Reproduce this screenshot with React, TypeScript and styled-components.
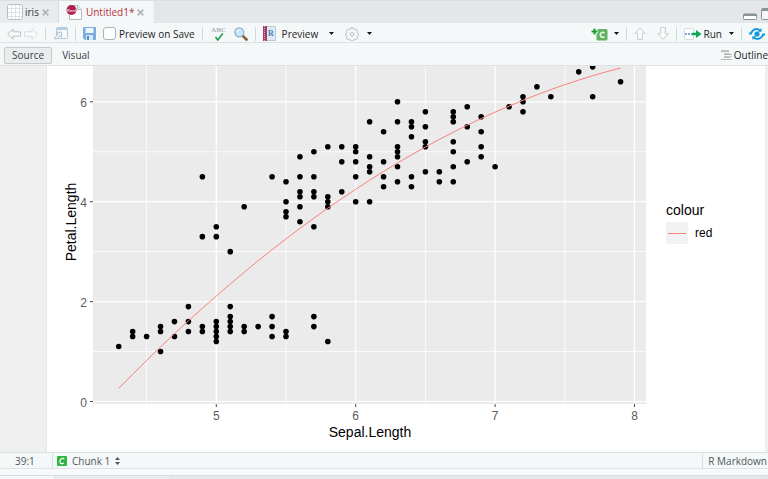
import React from "react";
import styled, { createGlobalStyle } from "styled-components";

const GlobalStyle = createGlobalStyle`
  * { box-sizing: border-box; }
  body {
    margin: 0;
    background: #e6e8ea;
    color: #1f2326;
    font: 10px/16px "Open Sans", "Noto Sans", sans-serif;
  }
  button { font: inherit; color: inherit; }
`;

const Editor = styled.div`
  display: flex;
  flex-direction: column;
  height: 100vh;
  overflow: hidden;
`;

const TabBar = styled.header`
  display: flex;
  height: 23px;
  flex: none;
  border-top: 1px solid #dcdfe1;
  background: #e4e6e8;
`;

const Tab = styled.div<{ $active?: boolean }>`
  display: flex;
  align-items: center;
  gap: 3px;
  padding: 0 9px 0 7px;
  color: ${(p) => (p.$active ? "#b5303c" : "#33383b")};
  background: ${(p) => (p.$active ? "#f4f8f9" : "#e9ebed")};
  border-right: 1px solid ${(p) => (p.$active ? "#eef1f2" : "#dadddf")};
`;

const PlainButton = styled.button<{ $gap?: number }>`
  display: flex;
  align-items: center;
  gap: ${(p) => p.$gap ?? 0}px;
  flex: none;
  padding: 0;
  border: 0;
  background: none;
  white-space: nowrap;
  svg { display: block; flex: none; }
`;

const WindowControls = styled.div`
  display: flex;
  align-items: flex-end;
  gap: 4px;
  margin-left: auto;
  padding-bottom: 3px;
`;

const Bar = styled.div<{ $height: number }>`
  display: flex;
  align-items: center;
  justify-content: space-between;
  flex: none;
  height: ${(p) => p.$height}px;
  padding-top: 2px;
  background: #f4f8f9;
  border-bottom: 1px solid #dce2e3;
`;

const Group = styled.div<{ $gap?: number; $start?: number; $end?: number }>`
  display: flex;
  align-items: center;
  gap: ${(p) => p.$gap ?? 7}px;
  padding-left: ${(p) => p.$start ?? 0}px;
  padding-right: ${(p) => p.$end ?? 0}px;
`;

const Divider = styled.span`
  width: 1px;
  height: 14px;
  background: #d3d8da;
`;

const CheckLabel = styled.label`
  display: flex;
  align-items: center;
  gap: 3px;
  white-space: nowrap;
`;

const Checkbox = styled.input`
  appearance: none;
  width: 13px;
  height: 13px;
  margin: 0;
  border: 1px solid #aeb2b5;
  border-radius: 3px;
  background: #fff;
`;

const ModeButton = styled.button<{ $on?: boolean }>`
  height: 17px;
  padding: 0 7px;
  line-height: 14px;
  color: #3c4145;
  background: ${(p) => (p.$on ? "#ebeced" : "transparent")};
  border: 1px solid ${(p) => (p.$on ? "#c5cacd" : "transparent")};
  border-radius: 2px;
`;

const Workspace = styled.main`
  display: flex;
  flex: 1;
  min-height: 0;
  overflow: hidden;
  background: #f0f0f0;
`;

const Gutter = styled.div`
  flex: none;
  width: 47px;
  border-right: 1px solid #e6e6e6;
`;

const Output = styled.figure`
  display: flex;
  flex: 1;
  min-width: 0;
  gap: 20px;
  margin: 0 3px 0 0;
  background: #fff;
  font-family: "Liberation Sans", Arial, sans-serif;
`;

const Plot = styled.svg`
  display: block;
  flex: none;
  width: 599px;
  height: 386px;
`;

const Legend = styled.figcaption`
  padding-top: 136px;
  color: #000;
`;

const LegendTitle = styled.div`
  font-size: 14px;
`;

const LegendEntry = styled.div`
  display: flex;
  align-items: center;
  gap: 7px;
  margin-top: 4px;
  font-size: 12px;
`;

const LegendKey = styled.svg`
  width: 22px;
  height: 22px;
  background: #f2f2f2;
`;

const StatusBar = styled.footer`
  display: flex;
  flex: none;
  height: 17px;
  color: #50565a;
  background: #f4f8f9;
  border-top: 1px solid #dce1e3;
  border-bottom: 1px solid #dfe3e5;
`;

const Position = styled.div`
  width: 53px;
  padding-left: 15px;
  border-right: 1px solid #d9dee0;
`;

const Language = styled.div`
  margin-left: auto;
  padding: 0 1px 0 5px;
  border-left: 1px solid #d9dee0;
`;

const LowerPane = styled.div`
  display: flex;
  flex: none;
  height: 10px;
  padding-top: 6px;
  background: #f7f9fa;
`;

const LowerTab = styled.div<{ $tone: string; $width?: number }>`
  flex: ${(p) => (p.$width ? `0 0 ${p.$width}px` : "1")};
  border-top: 1px solid #d7dbdd;
  border-right: 1px solid #dde0e2;
  background: ${(p) => p.$tone};
`;

const Caret = () => (
  <svg width="5" height="3" viewBox="0 0 5 3"><path d="M0 0h5L2.5 3z" fill="#151515" /></svg>
);

const CloseIcon = () => (
  <svg width="7" height="7" viewBox="0 0 7 7">
    <path d="M.7 .7l5.6 5.6M6.3 .7L.7 6.3" stroke="#b4b7b9" strokeWidth="1.8" />
  </svg>
);

const TableIcon = () => (
  <svg width="16" height="16" viewBox="0 0 16 16">
    <rect x=".5" y=".5" width="15" height="15" rx="2" fill="#fff" stroke="#b9bdc0" />
    <path d="M4.5 1v14M8.5 1v14M12.5 1v14M1 4.5h14M1 8.5h14M1 12.5h14" stroke="#dae3e7" />
  </svg>
);

const RmdIcon = () => (
  <svg width="16" height="16" viewBox="0 0 16 16">
    <path d="M3.5 1.5h8l4 4v10h-12z" fill="#fff" stroke="#b5babc" />
    <path d="M11.5 1.5v4h4" fill="#eceeef" stroke="#b8bcbe" />
    <circle cx="5.5" cy="6" r="5" fill="#ad2350" />
    <text x="5.5" y="7.5" textAnchor="middle" fontFamily="Liberation Sans" fontSize="4" fontWeight="700" fill="#f3cfdb">Rmd</text>
  </svg>
);

const NavArrow = ({ forward = false }: { forward?: boolean }) => (
  <svg width="14" height="12" viewBox="0 0 14 12">
    <path
      d={forward ? "M13.3 6L8 .8v3H.6v4.4H8v3z" : "M.7 6L6 .8v3h7.4v4.4H6v3z"}
      fill="#fafcfc" stroke={forward ? "#dadddf" : "#babfc2"} strokeLinejoin="round"
    />
  </svg>
);

const PopOutIcon = () => (
  <svg width="15" height="13" viewBox="0 0 15 13">
    <rect x="3.5" y=".5" width="11" height="11" rx="1" fill="#f5f9fb" stroke="#b5cad6" />
    <path d="M4 2h10" stroke="#b4d0e1" strokeWidth="2" />
    <path d="M1 11.2l4-4-1.5-2h5v5L7 8.8l-3.8 3.7z" fill="#eef3f6" stroke="#9fb8c7" strokeWidth=".8" />
  </svg>
);

const SaveIcon = () => (
  <svg width="13" height="13" viewBox="0 0 13 13">
    <path d="M0 1q0-1 1-1h11q1 0 1 1v11q0 1-1 1H2l-2-2z" fill="#78ade0" />
    <path d="M2.5 1h8v5h-8z" fill="#eef6fc" />
    <path d="M3 8h7v5H3z" fill="#d8e7f3" />
    <path d="M4 9h2v4H4z" fill="#4f8fca" />
  </svg>
);

const SpellIcon = () => (
  <svg width="17" height="16" viewBox="0 0 17 16">
    <text x="8.5" y="6" textAnchor="middle" fontFamily="Liberation Serif" fontWeight="700" fontSize="7" fill="#a9b0b4">ABC</text>
    <path d="M5.5 11l2.3 3 5-6.5" fill="none" stroke="#1e9d45" strokeWidth="1.6" />
  </svg>
);

const SearchIcon = () => (
  <svg width="14" height="14" viewBox="0 0 14 14">
    <path d="M8.3 8.3l4.2 4.2" stroke="#765133" strokeWidth="2.6" strokeLinecap="round" />
    <path d="M9 8.8l3.3 3.1" stroke="#b27b4b" strokeWidth="1" />
    <circle cx="5.3" cy="5.3" r="4.5" fill="#cbe4f8" stroke="#8db4d8" strokeWidth="1.3" />
    <path d="M2.7 5a2.8 2.8 0 012.6-2.3" fill="none" stroke="#fff" />
  </svg>
);

const NotebookIcon = () => (
  <svg width="13" height="15" viewBox="0 0 13 15">
    <path d="M2 .5h10.5v14H2z" fill="#dceaf4" stroke="#bacbd6" />
    <path d="M0 0h4v15H0z" fill="#a63a69" />
    <path d="M1.5 0v15" stroke="#ddabc1" strokeDasharray="1 1" />
    <text x="8" y="10" textAnchor="middle" fontFamily="Liberation Serif" fontWeight="700" fontSize="8" fill="#477fae">R</text>
  </svg>
);

const GearIcon = () => (
  <svg width="14" height="14" viewBox="0 0 14 14" fill="none" stroke="#bcc1c4">
    <path d="M5.8.7h2.4l.4 1.7 1 .4 1.5-.9 1.6 1.7-.9 1.4.4 1 1.4.3v2.3l-1.4.4-.4 1 .9 1.5-1.6 1.6-1.5-.9-1 .4-.4 1.1H5.8l-.4-1.1-1-.4-1.5.9-1.6-1.6.9-1.5-.4-1-1.2-.4V6.3L1.8 6l.4-1-.9-1.4 1.6-1.7 1.5.9 1-.4z" />
    <circle cx="7" cy="7.2" r="1.8" />
  </svg>
);

const ChunkAddIcon = () => (
  <svg width="18" height="14" viewBox="0 0 18 14">
    <rect x="6.5" y="2" width="11" height="11.5" rx="1.5" fill="#62b062" />
    <path d="M14.5 6Q12.4 4.6 11 6t0 3.6q1.4 1.4 3.5 0" fill="none" stroke="#e8f6e8" strokeWidth="1.6" />
    <path d="M4.5 1v7M1 4.5h7" stroke="#fff" strokeWidth="3.6" />
    <path d="M4.5 1.5v6M1.5 4.5h6" stroke="#1b9c2c" strokeWidth="2" />
  </svg>
);

const StepArrow = ({ down = false }: { down?: boolean }) => (
  <svg width="12" height="13" viewBox="0 0 12 13">
    <path
      d={down ? "M6 12.3l5.3-5.5h-3V.6H3.7v6.2h-3z" : "M6 .7L.7 6.2h3v6.2h4.6V6.2h3z"}
      fill="#fbfcfc" stroke="#c6cacc" strokeLinejoin="round"
    />
  </svg>
);

const RunIcon = () => (
  <svg width="18" height="12" viewBox="0 0 18 12">
    <rect x=".5" y=".5" width="9" height="11" rx="1" fill="#fff" stroke="#d5dcdf" />
    <path d="M1 6h7" stroke="#77a9df" strokeWidth="2" strokeDasharray="2 1" />
    <path d="M8 4.8h4V2l5.5 4-5.5 4V7.2H8z" fill="#12a558" />
  </svg>
);

const PublishIcon = () => (
  <svg width="16" height="14" viewBox="0 0 16 14" fill="none" stroke="#139ae0" strokeWidth="2">
    <circle cx="8" cy="7" r="2.6" fill="#139ae0" stroke="none" />
    <path d="M0 6.5h2C3 3 6 1.4 9.4 2.4l2 1.2M16 7.5h-2c-1 3.5-4 5.1-7.4 4.1l-2-1.2" />
    <path d="M12.6 1v3.8H8.8zM3.4 13V9.2h3.8z" fill="#139ae0" stroke="none" />
  </svg>
);

const OutlineIcon = () => (
  <svg width="11" height="11" viewBox="0 0 11 11">
    <path d="M0 1.5h8M3 4.5h8M3 7.5h6M0 9.5h11" stroke="#b3b8bb" strokeWidth="1" />
    <path d="M0 .5h8M3 3.5h6M3 6.5h8" stroke="#c3c8cb" strokeWidth="1" />
  </svg>
);

const MinimizeIcon = () => (
  <svg width="14" height="7" viewBox="0 0 14 7">
    <rect x=".5" y="1" width="13" height="5.5" rx="1" fill="#fff" stroke="#8a9398" />
    <path d="M1 2h12" stroke="#8a9398" strokeWidth="2" />
  </svg>
);

const MaximizeIcon = () => (
  <svg width="7" height="12" viewBox="0 0 7 12">
    <rect x=".5" y=".5" width="13" height="11" rx="1" fill="#f4f6f7" stroke="#8a9398" />
    <path d="M1 2h12" stroke="#8a9398" strokeWidth="2" />
  </svg>
);

const ChunkIcon = () => (
  <svg width="10" height="10" viewBox="0 0 10 10">
    <rect width="10" height="10" rx="1" fill="#32b540" />
    <path d="M7.3 3.3Q6.5 2 4.8 2.5T3 5t.8 2.5 2.9-.4" fill="none" stroke="#fff" strokeWidth="1.2" />
  </svg>
);

const SpinIcon = () => (
  <svg width="5" height="8" viewBox="0 0 5 8">
    <path d="M0 3l2.5-3L5 3zM0 5h5L2.5 8z" fill="#50565a" />
  </svg>
);

// Petal lengths observed for each sepal length in the iris data set.
const IRIS: [number, number[]][] = [
  [4.3, [1.1]],
  [4.4, [1.3, 1.4]],
  [4.5, [1.3]],
  [4.6, [1, 1.4, 1.5]],
  [4.7, [1.3, 1.6]],
  [4.8, [1.4, 1.6, 1.9]],
  [4.9, [1.4, 1.5, 3.3, 4.5]],
  [5, [1.2, 1.3, 1.4, 1.5, 1.6, 3.3, 3.5]],
  [5.1, [1.4, 1.5, 1.6, 1.7, 1.9, 3]],
  [5.2, [1.4, 1.5, 3.9]],
  [5.3, [1.5]],
  [5.4, [1.3, 1.5, 1.7, 4.5]],
  [5.5, [1.3, 1.4, 3.7, 3.8, 4, 4.4]],
  [5.6, [3.6, 3.9, 4.1, 4.2, 4.5, 4.9]],
  [5.7, [1.5, 1.7, 3.5, 4.1, 4.2, 4.5, 5]],
  [5.8, [1.2, 3.9, 4, 4.1, 5.1]],
  [5.9, [4.2, 4.8, 5.1]],
  [6, [4, 4.5, 4.8, 5, 5.1]],
  [6.1, [4, 4.6, 4.7, 4.9, 5.6]],
  [6.2, [4.3, 4.5, 4.8, 5.4]],
  [6.3, [4.4, 4.7, 4.9, 5, 5.1, 5.6, 6]],
  [6.4, [4.3, 4.5, 5.3, 5.5, 5.6]],
  [6.5, [4.6, 5.1, 5.2, 5.5, 5.8]],
  [6.6, [4.4, 4.6]],
  [6.7, [4.4, 4.7, 5, 5.2, 5.6, 5.7, 5.8]],
  [6.8, [4.8, 5.5, 5.9]],
  [6.9, [4.9, 5.1, 5.4, 5.7]],
  [7, [4.7]],
  [7.1, [5.9]],
  [7.2, [5.8, 6, 6.1]],
  [7.3, [6.3]],
  [7.4, [6.1]],
  [7.6, [6.6]],
  [7.7, [6.1, 6.7, 6.9]],
  [7.9, [6.4]],
];

const px = (sepal: number) => 169.3 + 139.4 * (sepal - 5);
const py = (petal: number) => 335.5 - 49.95 * petal;

const FIT = Array.from({ length: 37 }, (_, i) => {
  const x = 4.3 + i / 10;
  const y = -17.447 + 5.392 * x - 0.296 * x * x;
  return `${px(x).toFixed(1)},${py(y).toFixed(1)}`;
}).join(" ");

const IrisPlot = () => (
  <Plot viewBox="0 0 599 386" role="img" aria-label="Petal.Length against Sepal.Length">
    <rect x="46" y="0" width="553" height="338" fill="#ebebeb" />
    <g stroke="#fff">
      {[4.5, 5, 5.5, 6, 6.5, 7, 7.5, 8].map((v) => (
        <line key={v} x1={px(v)} x2={px(v)} y1="0" y2="338" strokeWidth={v % 1 ? 0.8 : 1.2} />
      ))}
      {[0, 1, 2, 3, 4, 5, 6].map((v) => (
        <line key={v} x1="46" x2="599" y1={py(v)} y2={py(v)} strokeWidth={v % 2 ? 0.8 : 1.2} />
      ))}
    </g>
    <g fill="#000">
      {IRIS.flatMap(([x, ys]) => ys.map((y) => (
        <circle key={`${x}-${y}`} cx={px(x)} cy={py(y)} r="2.8" />
      )))}
    </g>
    <polyline points={FIT} fill="none" stroke="#f8837b" />
    <g stroke="#444">
      {[5, 6, 7, 8].map((v) => <line key={v} x1={px(v)} x2={px(v)} y1="338" y2="341" />)}
      {[0, 2, 4, 6].map((v) => <line key={v} x1="43" x2="46" y1={py(v)} y2={py(v)} />)}
    </g>
    <g fontSize="12" fill="#5c5c5c">
      {[5, 6, 7, 8].map((v) => <text key={v} x={px(v)} y="354" textAnchor="middle">{v}</text>)}
      {[0, 2, 4, 6].map((v) => <text key={v} x="40" y={py(v) + 5} textAnchor="end">{v}</text>)}
    </g>
    <g fontSize="14" fill="#000" textAnchor="middle">
      <text x="323" y="371">Sepal.Length</text>
      <text transform="translate(29 156) rotate(-90)">Petal.Length</text>
    </g>
  </Plot>
);

export default function App() {
  return (
    <Editor>
      <GlobalStyle />
      <TabBar>
        <Tab>
          <PlainButton $gap={2}><TableIcon />iris</PlainButton>
          <PlainButton aria-label="Close iris"><CloseIcon /></PlainButton>
        </Tab>
        <Tab $active>
          <PlainButton $gap={4}><RmdIcon />Untitled1*</PlainButton>
          <PlainButton aria-label="Close Untitled1"><CloseIcon /></PlainButton>
        </Tab>
        <WindowControls>
          <PlainButton aria-label="Minimize"><MinimizeIcon /></PlainButton>
          <PlainButton aria-label="Maximize"><MaximizeIcon /></PlainButton>
        </WindowControls>
      </TabBar>

      <Bar $height={20}>
        <Group $start={7}>
          <Group $gap={3}>
            <PlainButton aria-label="Back"><NavArrow /></PlainButton>
            <PlainButton aria-label="Forward"><NavArrow forward /></PlainButton>
          </Group>
          <Divider />
          <PlainButton aria-label="Show in new window"><PopOutIcon /></PlainButton>
          <Divider />
          <PlainButton aria-label="Save"><SaveIcon /></PlainButton>
          <CheckLabel><Checkbox type="checkbox" />Preview on Save</CheckLabel>
          <Divider />
          <PlainButton aria-label="Check spelling"><SpellIcon /></PlainButton>
          <PlainButton aria-label="Find and replace"><SearchIcon /></PlainButton>
          <Divider />
          <Group $gap={11}>
            <PlainButton $gap={6}><NotebookIcon />Preview</PlainButton>
            <PlainButton aria-label="Preview options"><Caret /></PlainButton>
            <PlainButton $gap={8} aria-label="Settings"><GearIcon /><Caret /></PlainButton>
          </Group>
        </Group>
        <Group $end={3}>
          <PlainButton $gap={6} aria-label="Insert chunk"><ChunkAddIcon /><Caret /></PlainButton>
          <Divider />
          <Group $gap={11}>
            <PlainButton aria-label="Previous chunk"><StepArrow /></PlainButton>
            <PlainButton aria-label="Next chunk"><StepArrow down /></PlainButton>
          </Group>
          <Divider />
          <PlainButton $gap={2}><RunIcon />Run</PlainButton>
          <PlainButton aria-label="Run options"><Caret /></PlainButton>
          <Divider />
          <PlainButton aria-label="Publish"><PublishIcon /></PlainButton>
        </Group>
      </Bar>

      <Bar $height={23}>
        <Group $gap={2} $start={4}>
          <ModeButton $on>Source</ModeButton>
          <ModeButton>Visual</ModeButton>
        </Group>
        <PlainButton $gap={2}><OutlineIcon />Outline</PlainButton>
      </Bar>

      <Workspace>
        <Gutter />
        <Output>
          <IrisPlot />
          <Legend>
            <LegendTitle>colour</LegendTitle>
            <LegendEntry>
              <LegendKey viewBox="0 0 22 22"><path d="M2 11.5h18" stroke="#f8837b" /></LegendKey>
              red
            </LegendEntry>
          </Legend>
        </Output>
      </Workspace>

      <StatusBar>
        <Position>39:1</Position>
        <Group $gap={5} $start={4}>
          <PlainButton $gap={5}><ChunkIcon />Chunk 1</PlainButton>
          <PlainButton aria-label="Jump to chunk"><SpinIcon /></PlainButton>
        </Group>
        <Language>R Markdown</Language>
      </StatusBar>
      <LowerPane>
        <LowerTab $tone="#f4f8f9" $width={55} />
        <LowerTab $tone="#e9ebed" $width={116} />
        <LowerTab $tone="#e4e6e8" />
      </LowerPane>
    </Editor>
  );
}
